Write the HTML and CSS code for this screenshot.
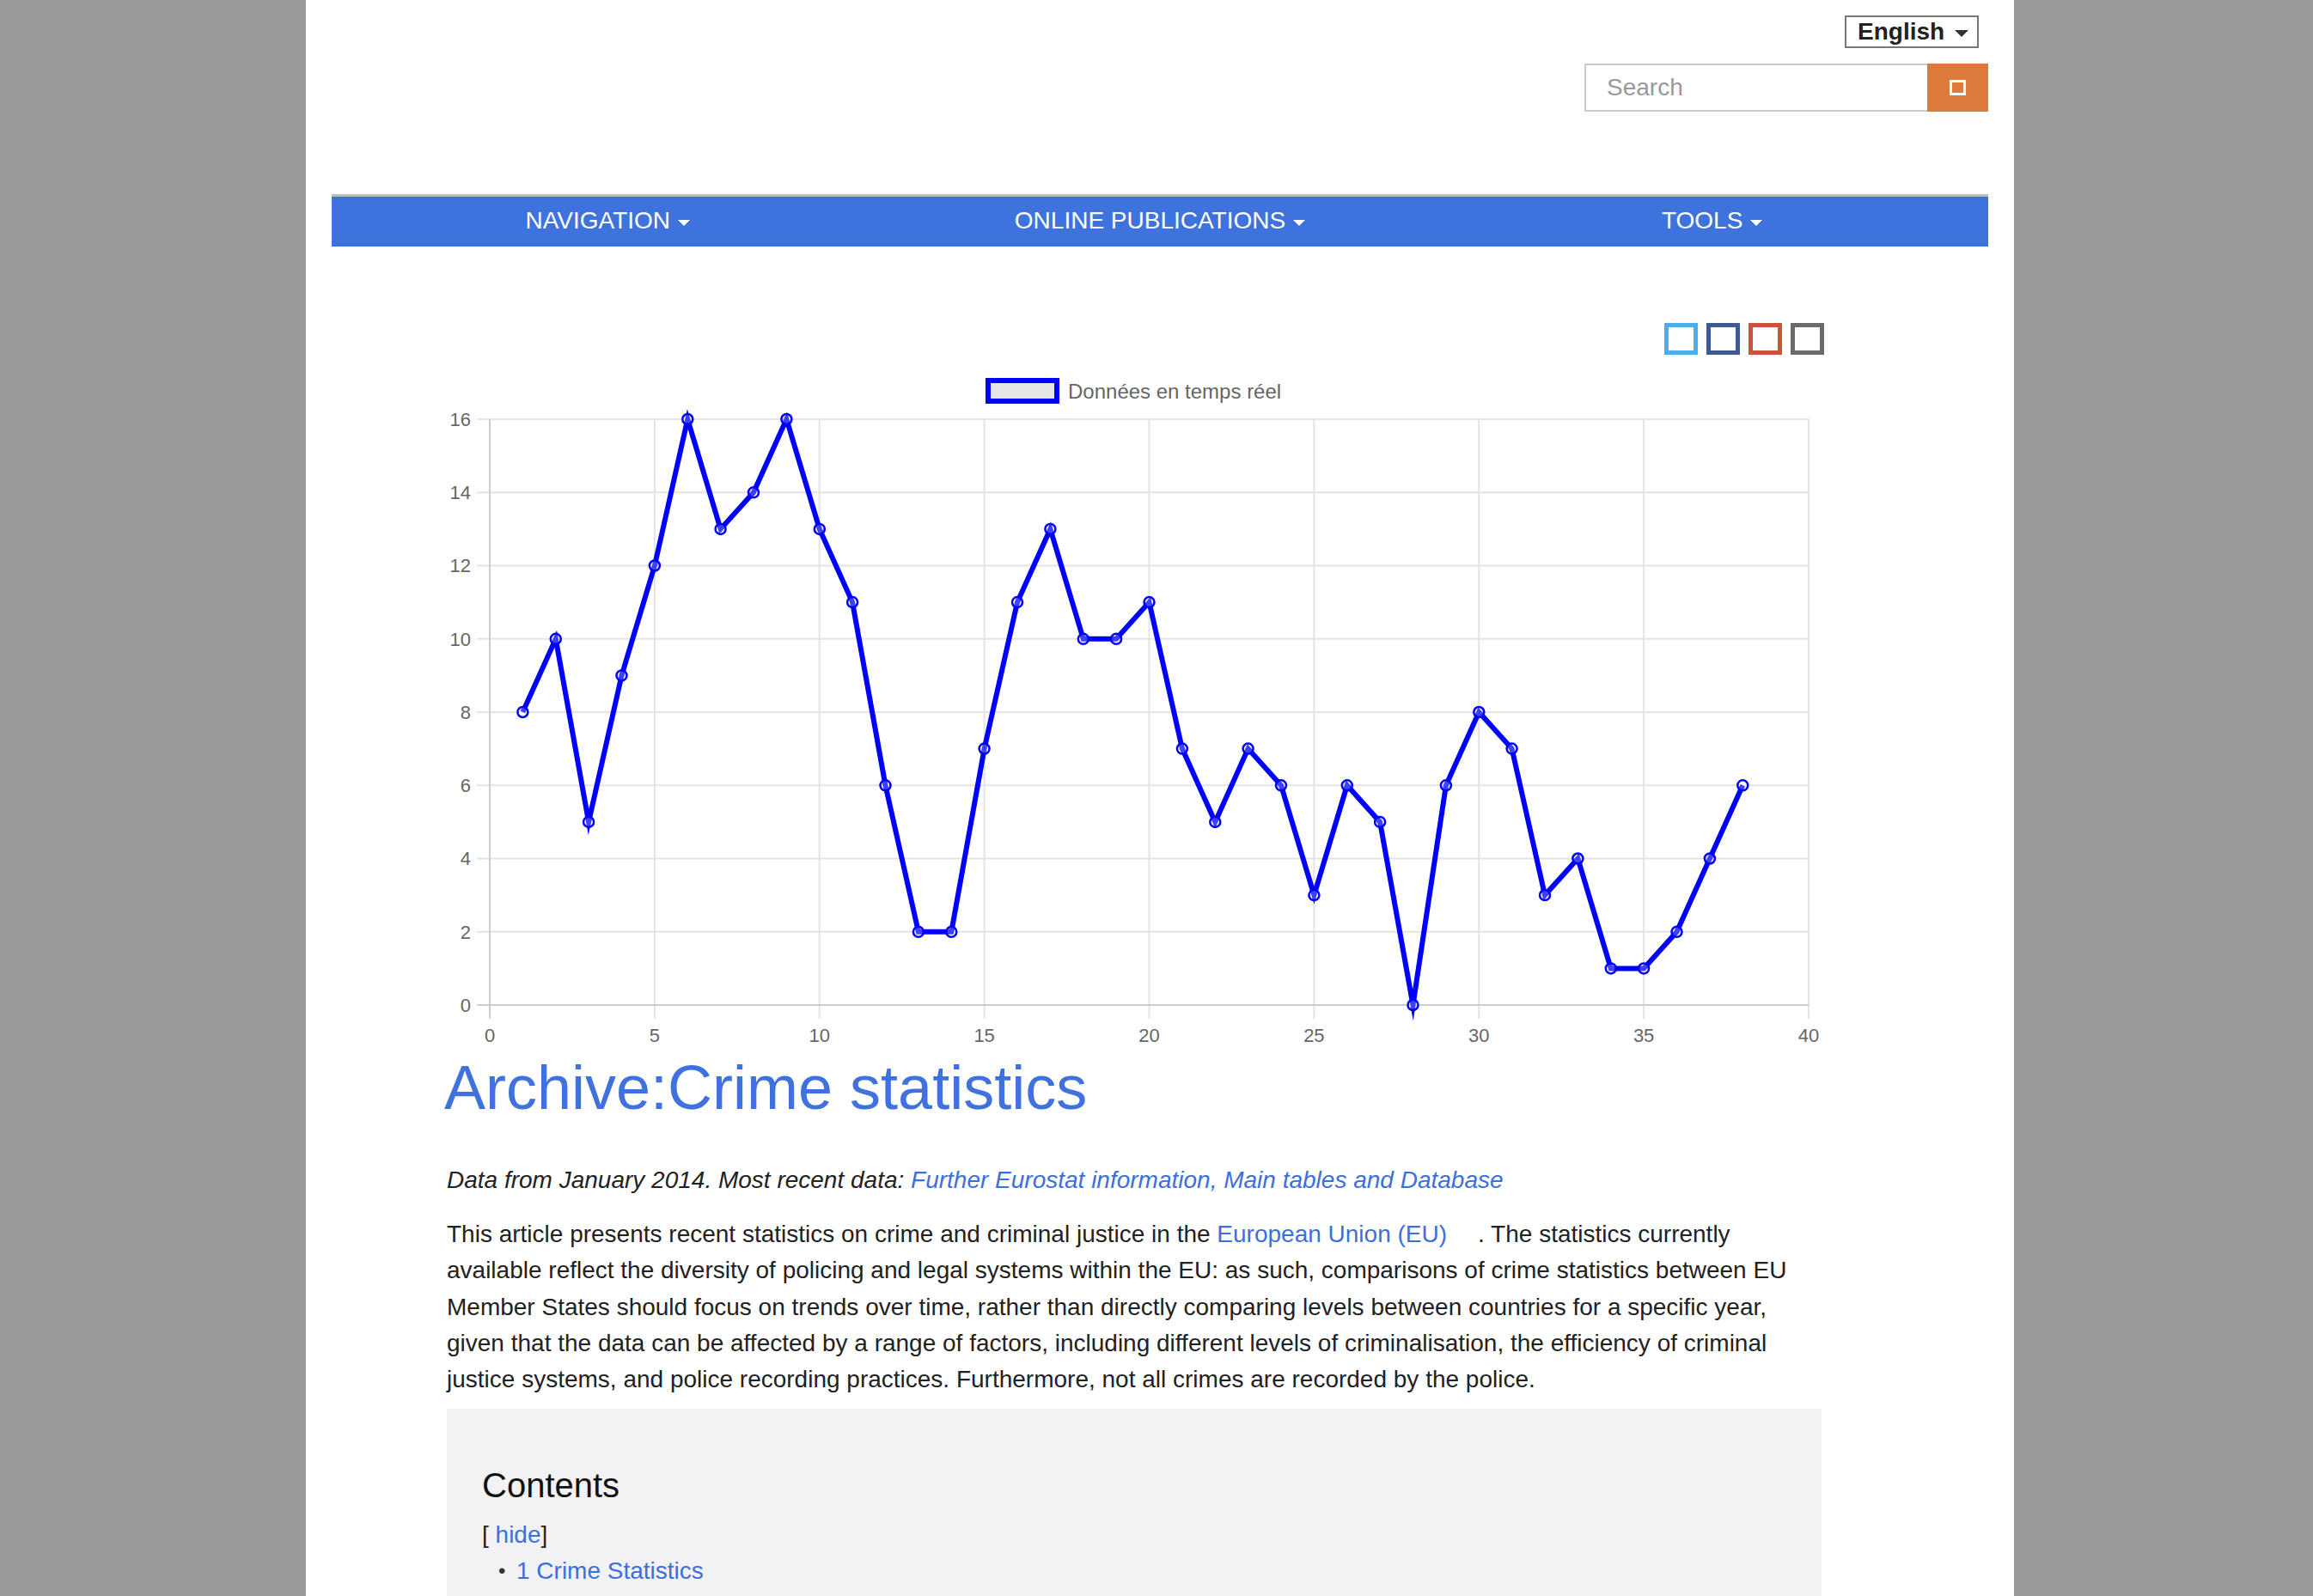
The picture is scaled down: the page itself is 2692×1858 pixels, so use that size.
FILE: index.html
```html
<!DOCTYPE html>
<html lang="en">
<head>
<meta charset="utf-8">
<title>Archive:Crime statistics</title>
<link rel="stylesheet" href="styles.css">
</head>
<body>
<div class="page">
  <header class="header">
    <div class="lang">English<span class="lang-caret"></span></div>
    <form class="search">
      <input class="search-input" type="text" placeholder="Search">
      <button class="search-btn" type="button"><span class="search-icon"></span></button>
    </form>
  </header>
  <nav class="nav">
    <div class="nav-item">NAVIGATION<span class="caret"></span></div>
    <div class="nav-item">ONLINE PUBLICATIONS<span class="caret"></span></div>
    <div class="nav-item">TOOLS<span class="caret"></span></div>
  </nav>
  <main class="content">
    <div class="swatches">
      <span class="sw sw-1"></span>
      <span class="sw sw-2"></span>
      <span class="sw sw-3"></span>
      <span class="sw sw-4"></span>
    </div>
    <svg class="chart" width="1600" height="795" viewBox="0 0 1600 795" xmlns="http://www.w3.org/2000/svg">
      <rect x="630" y="18" width="80" height="24" fill="#e6e6e6" stroke="#0000ff" stroke-width="6"/>
      <text x="723" y="39" class="legend-text">Données en temps réel</text>
      <g stroke="#e4e4e4" stroke-width="2">
        <line x1="35" y1="659.75" x2="1585" y2="659.75"/>
        <line x1="35" y1="574.5" x2="1585" y2="574.5"/>
        <line x1="35" y1="489.25" x2="1585" y2="489.25"/>
        <line x1="35" y1="404" x2="1585" y2="404"/>
        <line x1="35" y1="318.75" x2="1585" y2="318.75"/>
        <line x1="35" y1="233.5" x2="1585" y2="233.5"/>
        <line x1="35" y1="148.25" x2="1585" y2="148.25"/>
        <line x1="35" y1="63" x2="1585" y2="63"/>
        <line x1="241.875" y1="63" x2="241.875" y2="761"/>
        <line x1="433.75" y1="63" x2="433.75" y2="761"/>
        <line x1="625.625" y1="63" x2="625.625" y2="761"/>
        <line x1="817.5" y1="63" x2="817.5" y2="761"/>
        <line x1="1009.375" y1="63" x2="1009.375" y2="761"/>
        <line x1="1201.25" y1="63" x2="1201.25" y2="761"/>
        <line x1="1393.125" y1="63" x2="1393.125" y2="761"/>
        <line x1="1585" y1="63" x2="1585" y2="761"/>
      </g>
      <g stroke="#cdcdcd" stroke-width="2">
        <line x1="35" y1="745" x2="1585" y2="745"/>
        <line x1="50" y1="63" x2="50" y2="761"/>
      </g>
      <g class="tick" text-anchor="end">
        <text x="28" y="753">0</text>
        <text x="28" y="668">2</text>
        <text x="28" y="582">4</text>
        <text x="28" y="497">6</text>
        <text x="28" y="412">8</text>
        <text x="28" y="327">10</text>
        <text x="28" y="241">12</text>
        <text x="28" y="156">14</text>
        <text x="28" y="71">16</text>
      </g>
      <g class="tick" text-anchor="middle">
        <text x="50" y="788">0</text>
        <text x="241.875" y="788">5</text>
        <text x="433.75" y="788">10</text>
        <text x="625.625" y="788">15</text>
        <text x="817.5" y="788">20</text>
        <text x="1009.375" y="788">25</text>
        <text x="1201.25" y="788">30</text>
        <text x="1393.125" y="788">35</text>
        <text x="1585" y="788">40</text>
      </g>
      <polyline fill="none" stroke="#0000ff" stroke-width="6" stroke-linejoin="miter" stroke-miterlimit="10"
        points="88.4,404 126.8,318.8 165.1,531.9 203.5,361.4 241.9,233.5 280.3,63 318.6,190.9 357,148.3 395.4,63 433.8,190.9 472.1,276.1 510.5,489.3 548.9,659.8 587.3,659.8 625.6,446.6 664,276.1 702.4,190.9 740.8,318.8 779.1,318.8 817.5,276.1 855.9,446.6 894.3,531.9 932.6,446.6 971,489.3 1009.4,617.1 1047.8,489.3 1086.1,531.9 1124.5,745 1162.9,489.3 1201.3,404 1239.6,446.6 1278,617.1 1316.4,574.5 1354.8,702.4 1393.1,702.4 1431.5,659.8 1469.9,574.5 1508.3,489.3"/>
      <g fill="rgba(255,255,255,0.25)" stroke="#0000ff" stroke-width="2.5">
        <circle cx="88.4" cy="404" r="6"/><circle cx="126.8" cy="318.8" r="6"/><circle cx="165.1" cy="531.9" r="6"/><circle cx="203.5" cy="361.4" r="6"/><circle cx="241.9" cy="233.5" r="6"/><circle cx="280.3" cy="63" r="6"/><circle cx="318.6" cy="190.9" r="6"/><circle cx="357" cy="148.3" r="6"/><circle cx="395.4" cy="63" r="6"/><circle cx="433.8" cy="190.9" r="6"/><circle cx="472.1" cy="276.1" r="6"/><circle cx="510.5" cy="489.3" r="6"/><circle cx="548.9" cy="659.8" r="6"/><circle cx="587.3" cy="659.8" r="6"/><circle cx="625.6" cy="446.6" r="6"/><circle cx="664" cy="276.1" r="6"/><circle cx="702.4" cy="190.9" r="6"/><circle cx="740.8" cy="318.8" r="6"/><circle cx="779.1" cy="318.8" r="6"/><circle cx="817.5" cy="276.1" r="6"/><circle cx="855.9" cy="446.6" r="6"/><circle cx="894.3" cy="531.9" r="6"/><circle cx="932.6" cy="446.6" r="6"/><circle cx="971" cy="489.3" r="6"/><circle cx="1009.4" cy="617.1" r="6"/><circle cx="1047.8" cy="489.3" r="6"/><circle cx="1086.1" cy="531.9" r="6"/><circle cx="1124.5" cy="745" r="6"/><circle cx="1162.9" cy="489.3" r="6"/><circle cx="1201.3" cy="404" r="6"/><circle cx="1239.6" cy="446.6" r="6"/><circle cx="1278" cy="617.1" r="6"/><circle cx="1316.4" cy="574.5" r="6"/><circle cx="1354.8" cy="702.4" r="6"/><circle cx="1393.1" cy="702.4" r="6"/><circle cx="1431.5" cy="659.8" r="6"/><circle cx="1469.9" cy="574.5" r="6"/><circle cx="1508.3" cy="489.3" r="6"/>
      </g>
    </svg>
    <h1 class="title">Archive:Crime statistics</h1>
    <p class="note"><em>Data from January 2014. Most recent data: <a href="#">Further Eurostat information, Main tables and Database</a></em></p>
    <p class="lead">This article presents recent statistics on crime and criminal justice in the <a href="#">European Union (EU)</a><span class="ext"></span>. The statistics currently available reflect the diversity of policing and legal systems within the EU: as such, comparisons of crime statistics between EU Member States should focus on trends over time, rather than directly comparing levels between countries for a specific year, given that the data can be affected by a range of factors, including different levels of criminalisation, the efficiency of criminal justice systems, and police recording practices. Furthermore, not all crimes are recorded by the police.</p>
    <div class="toc">
      <h2 class="toc-title">Contents</h2>
      <div class="toc-toggle">[ <a href="#">hide</a>]</div>
      <ul class="toc-list">
        <li class="toc-item"><span class="bullet">•</span><a href="#">1 Crime Statistics</a></li>
      </ul>
    </div>
  </main>
</div>
</body>
</html>
```
FILE: styles.css
```css
html, body {
  margin: 0;
  padding: 0;
}
body {
  background: #999999;
  font-family: "Liberation Sans", Arial, Helvetica, sans-serif;
  color: #222;
  overflow: hidden;
}
a {
  color: #3d6fdc;
  text-decoration: none;
}
.page {
  margin-left: 356px;
  width: 1988px;
  min-height: 1858px;
  background: #fff;
}
.header {
  height: 226px;
  box-sizing: border-box;
  padding: 18px 30px 0 0;
  display: flex;
  flex-direction: column;
  align-items: flex-end;
}
.lang {
  box-sizing: border-box;
  width: 156px;
  height: 38px;
  margin-right: 11px;
  border: 2px solid #777;
  font-weight: bold;
  font-size: 28px;
  line-height: 32px;
  color: #222;
  display: flex;
  align-items: center;
  padding-left: 13px;
  gap: 12px;
}
.lang-caret {
  width: 0;
  height: 0;
  border-left: 8px solid transparent;
  border-right: 8px solid transparent;
  border-top: 8px solid #333;
  margin-top: 3px;
}
.search {
  margin: 18px 0 0;
  display: flex;
}
.search-input {
  box-sizing: border-box;
  width: 399px;
  height: 56px;
  border: 2px solid #ccc;
  border-right: none;
  padding: 0 0 0 24px;
  font-family: "Liberation Sans", Arial, sans-serif;
  font-size: 28px;
  outline: none;
}
.search-input::placeholder {
  color: #999;
}
.search-btn {
  width: 71px;
  height: 56px;
  border: none;
  padding: 0;
  background: #dc7a3b;
  display: flex;
  align-items: center;
  justify-content: center;
}
.search-icon {
  box-sizing: border-box;
  width: 19px;
  height: 18px;
  border: 3px solid #fff;
}
.nav {
  margin: 0 30px;
  border-top: 3px solid #bdbdbd;
  background: #3e73de;
  height: 58px;
  display: grid;
  grid-template-columns: 1fr 1fr 1fr;
  align-items: center;
}
.nav-item {
  color: #fff;
  font-size: 28px;
  line-height: 32px;
  text-align: center;
  display: flex;
  align-items: center;
  justify-content: center;
  gap: 9px;
  margin-top: -2px;
}
.caret {
  width: 0;
  height: 0;
  border-left: 7px solid transparent;
  border-right: 7px solid transparent;
  border-top: 7px solid #fff;
  margin-top: 4px;
}
.content {
  margin-left: 164px;
  width: 1600px;
}
.swatches {
  display: flex;
  justify-content: flex-end;
  gap: 10px;
  padding-top: 89px;
  margin-right: -3px;
}
.sw {
  box-sizing: border-box;
  width: 39px;
  height: 37px;
  border: 5px solid;
}
.sw-1 { border-color: #4baeea; }
.sw-2 { border-color: #405a94; }
.sw-3 { border-color: #c9533d; }
.sw-4 { border-color: #6a6a6e; }
.chart {
  display: block;
  margin-top: 12px;
}
.legend-text {
  font-family: "Liberation Sans", Arial, sans-serif;
  font-size: 24px;
  fill: #666;
}
.tick text {
  font-family: "Liberation Sans", Arial, sans-serif;
  font-size: 22px;
  fill: #666;
}
.title {
  margin: 0 0 0 -3px;
  font-size: 72px;
  font-weight: normal;
  line-height: 92px;
  color: #3f71df;
}
.note {
  margin: 41px 0 0;
  font-size: 28px;
  line-height: 42px;
}
.lead {
  margin: 21px 0 0;
  font-size: 28px;
  line-height: 42.3px;
}
.ext {
  display: inline-block;
  width: 36px;
}
.toc {
  margin-top: 13px;
  background: #f2f2f4;
  padding: 66px 41px 30px;
  min-height: 300px;
}
.toc-title {
  margin: 0;
  font-size: 40px;
  font-weight: normal;
  line-height: 47px;
  color: #111;
}
.toc-toggle {
  margin-top: 13px;
  font-size: 28px;
  line-height: 42px;
}
.toc-list {
  list-style: none;
  margin: 0;
  padding: 0 0 0 19px;
}
.toc-item {
  font-size: 28px;
  line-height: 42px;
  display: flex;
}
.bullet {
  width: 21px;
  font-size: 24px;
  color: #333;
}
```
